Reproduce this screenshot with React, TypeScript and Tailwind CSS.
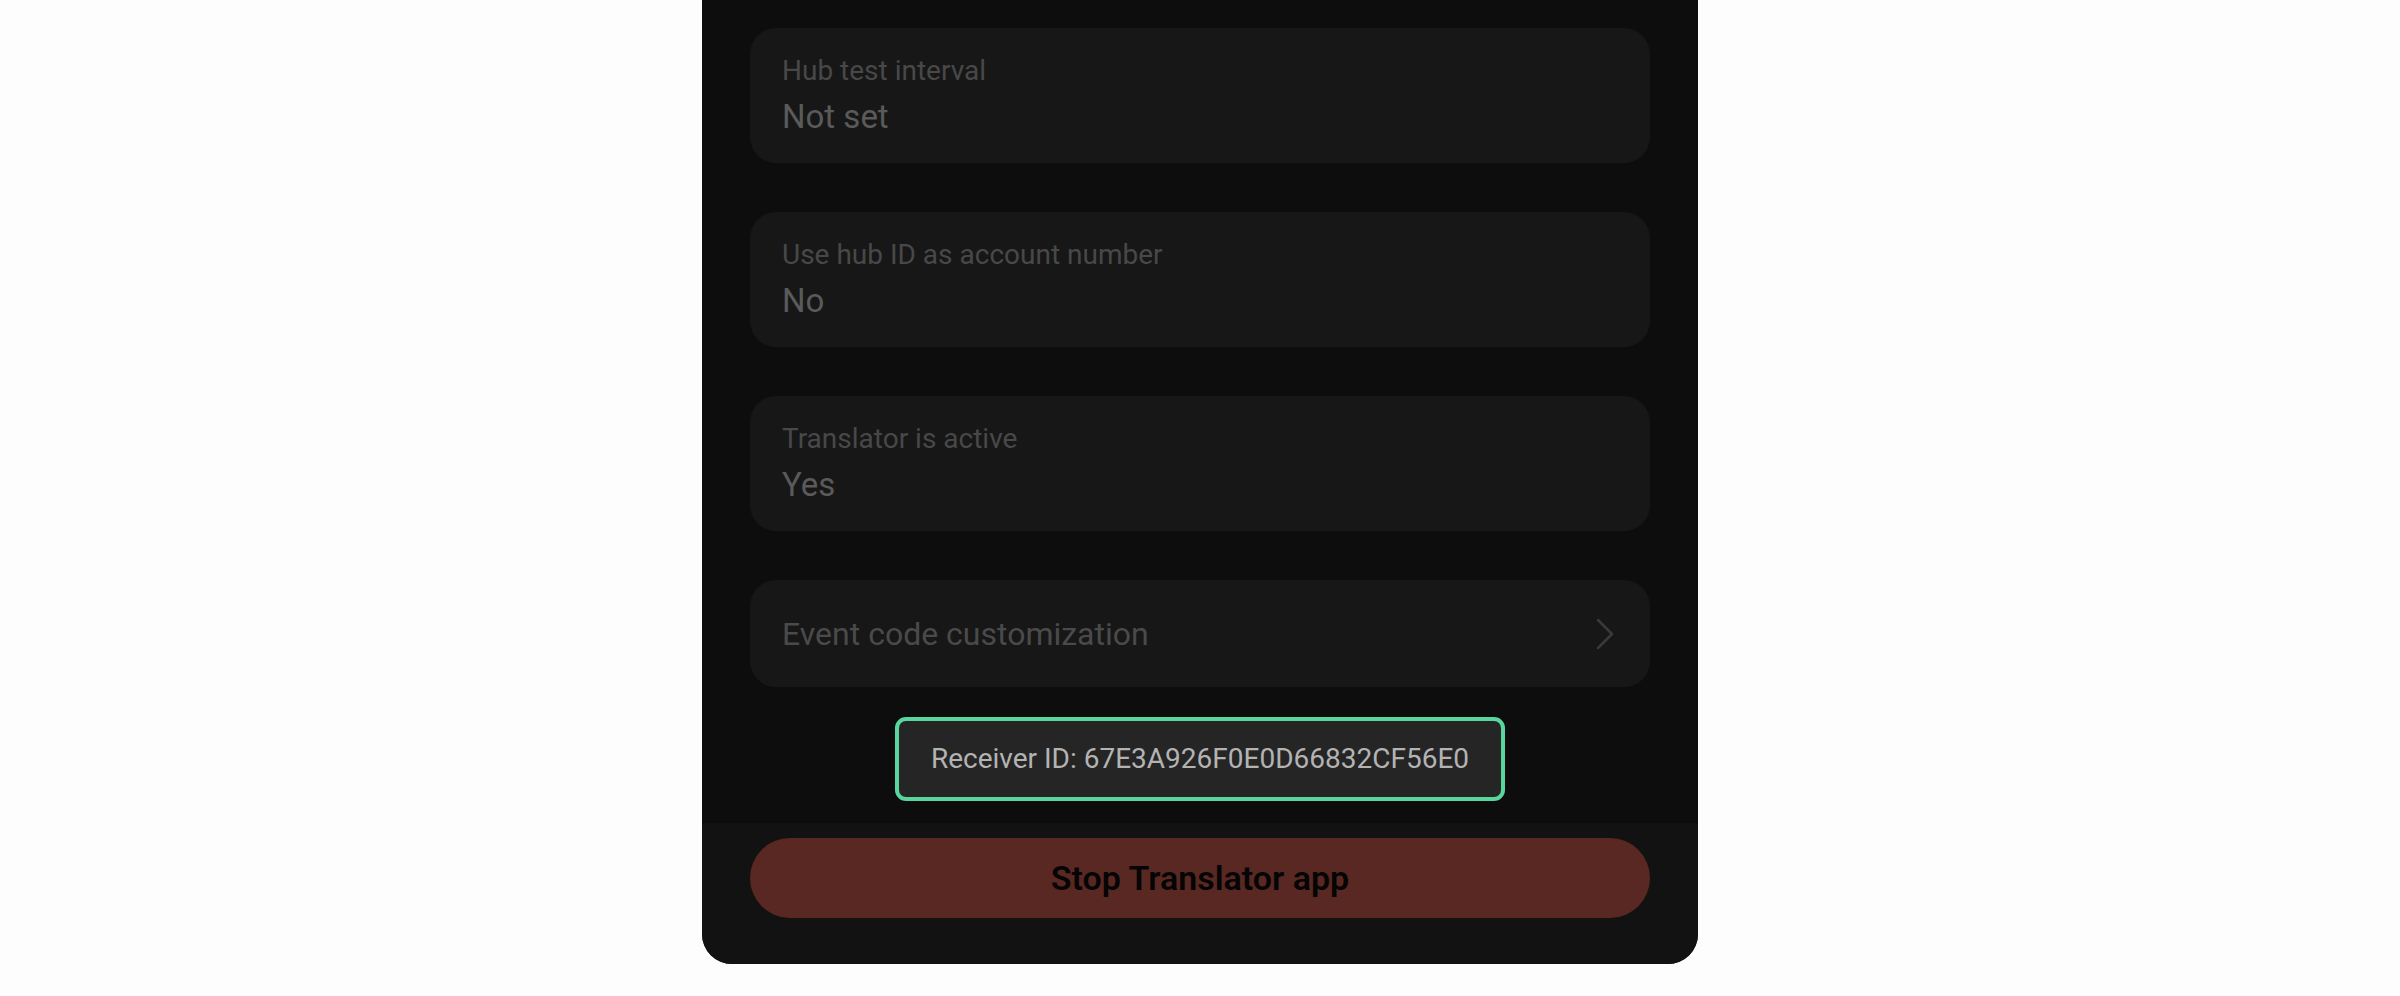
const SETTINGS = [
  { label: 'Hub test interval', value: 'Not set' },
  { label: 'Use hub ID as account number', value: 'No' },
  { label: 'Translator is active', value: 'Yes' },
];

const RECEIVER_ID = '67E3A926F0E0D66832CF56E0';

function SettingCard({ label, value }: { label: string; value: string }) {
  return (
    <div className="flex h-[135px] flex-col justify-center rounded-[26px] bg-[#171717] px-[32px]">
      <p className="text-[28px] leading-[34px] text-[#484848]">{label}</p>
      <p className="mt-[9px] text-[33px] leading-[40px] text-[#5a5a5a]">{value}</p>
    </div>
  );
}

export default function App() {
  return (
    <div
      className="flex min-h-[996px] justify-center bg-[#fdfdfd]"
      style={{ fontFamily: 'Roboto, "Noto Sans", sans-serif' }}
    >
      <div className="flex h-[964px] w-[996px] flex-col overflow-hidden rounded-b-[30px] bg-[#0d0d0d]">
        <div className="flex flex-col px-[48px] pt-[28px]">
          <div className="flex flex-col gap-[49px]">
            {SETTINGS.map((s) => (
              <SettingCard key={s.label} label={s.label} value={s.value} />
            ))}
            <div className="flex h-[107px] items-center justify-between rounded-[26px] bg-[#171717] pl-[32px] pr-[35px]">
              <span className="text-[32px] leading-[40px] text-[#4a4a4a]">Event code customization</span>
              <svg width="20" height="34" viewBox="0 0 20 34" fill="none" className="text-[#3a3a3a]">
                <path d="M3 3 L17 17 L3 31" stroke="currentColor" strokeWidth="2.5" strokeLinecap="round" strokeLinejoin="round" />
              </svg>
            </div>
          </div>
          <div className="mt-[30px] flex justify-center">
            <div className="flex h-[84px] items-center rounded-[11px] border-[4px] border-[#58d69e] bg-[#252525] px-[32px]">
              <span className="text-[28px] leading-[34px] text-[#b3b3b3]">Receiver ID: {RECEIVER_ID}</span>
            </div>
          </div>
        </div>
        <div className="mt-[22px] flex flex-1 flex-col bg-[#121212] px-[48px] pt-[15px]">
          <button className="flex h-[80px] items-center justify-center rounded-full bg-[#5a2822]">
            <span className="text-[34px] font-semibold leading-[40px] text-[#050505]">Stop Translator app</span>
          </button>
        </div>
      </div>
    </div>
  );
}
